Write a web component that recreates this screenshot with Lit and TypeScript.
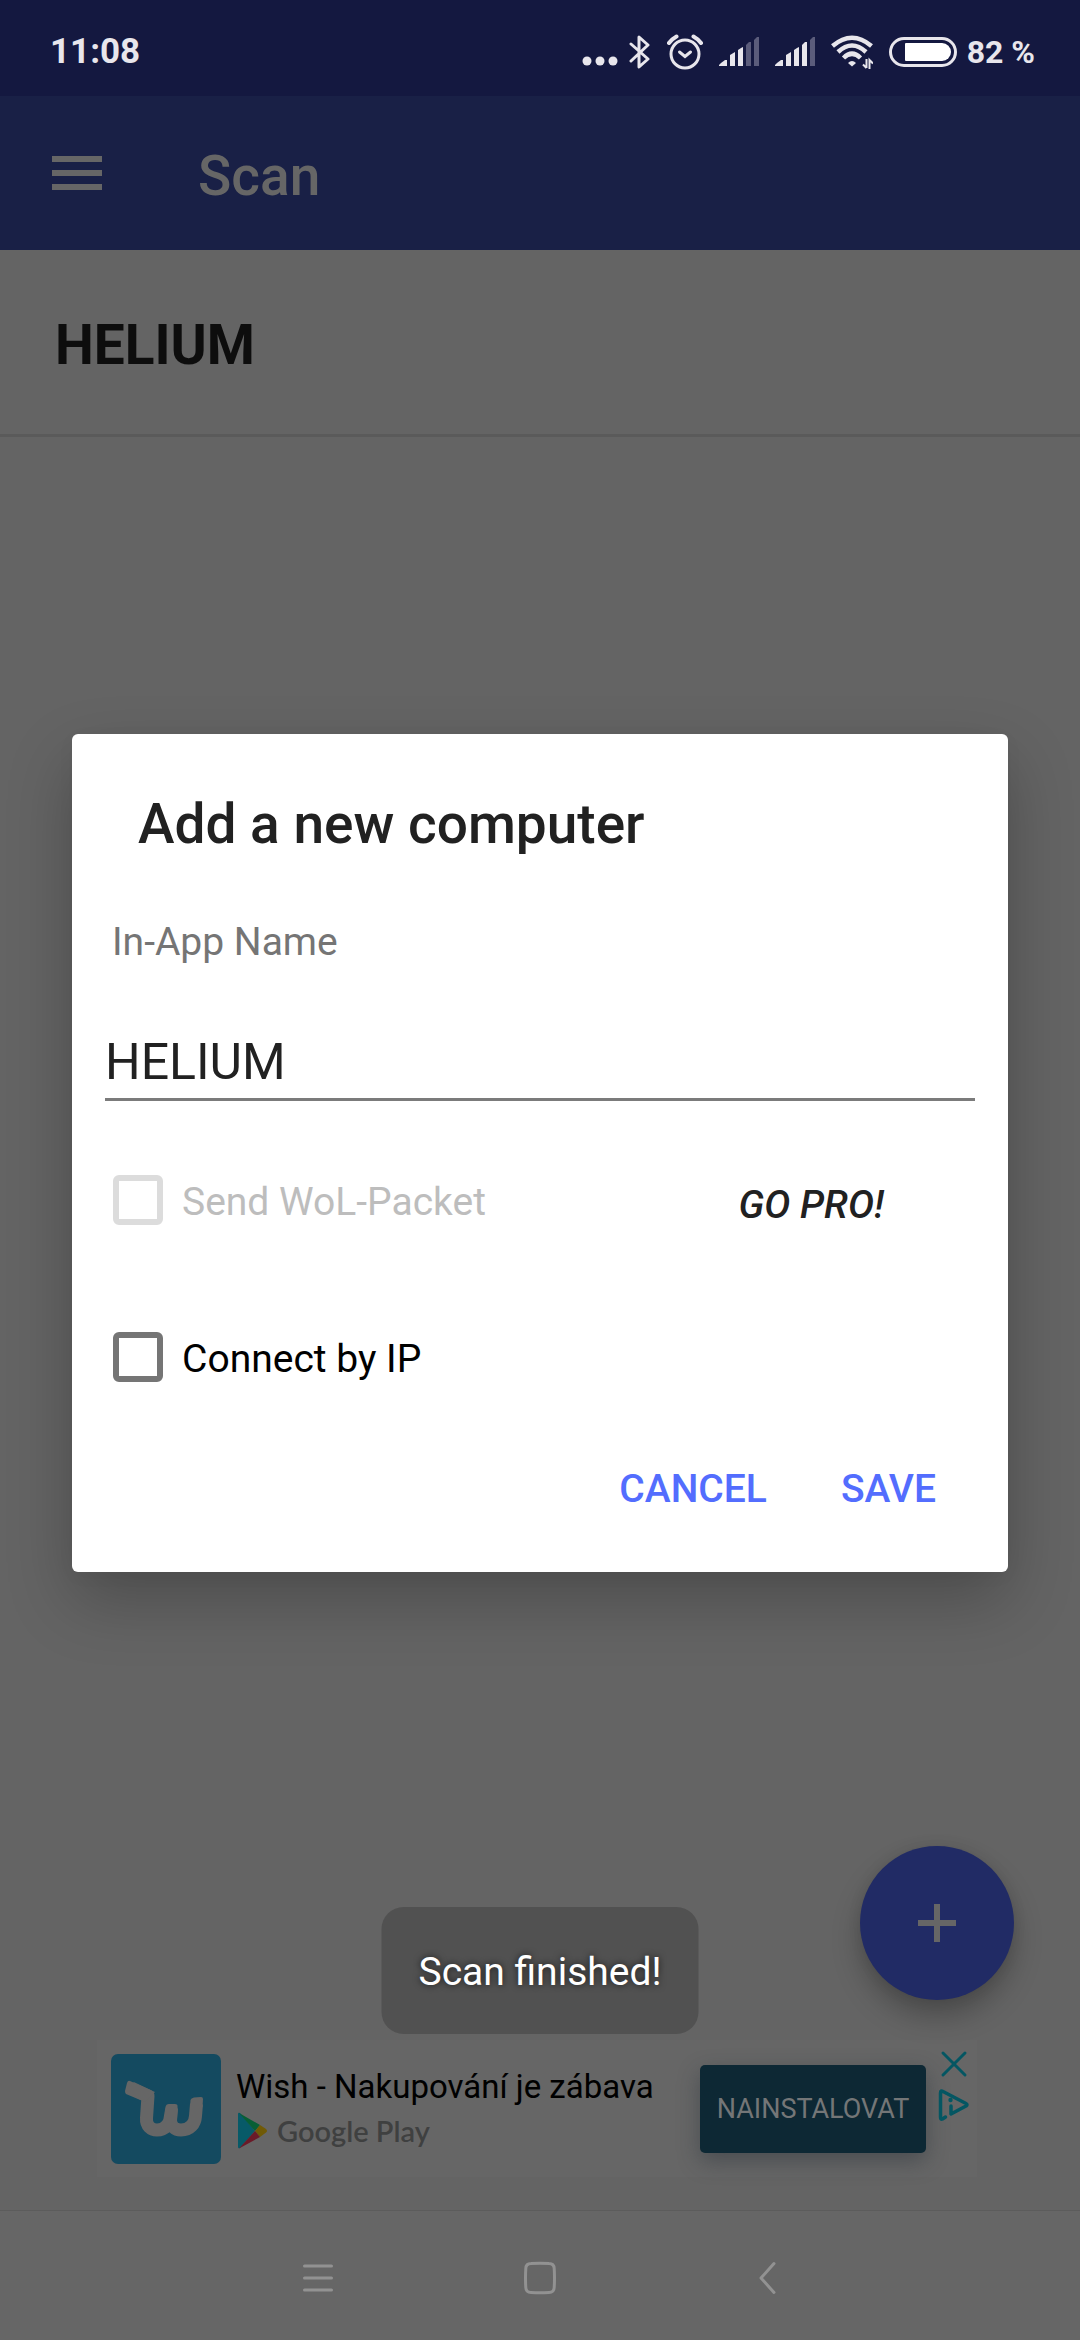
import { LitElement, html, css, svg } from "lit";
import { customElement, property, state } from "lit/decorators.js";

/** Cellular strength: five slanted bars, the first `level` of them lit. */
@customElement("signal-bars")
class SignalBars extends LitElement {
  @property({ type: Number }) level = 5;

  static styles = css`
    :host { display: block; }
    .bars { display: block; width: 40px; height: 30px; fill: #e8e6ec; }
    .off { fill: #5b5c7b; }
  `;

  render() {
    const shapes = [
      "0,29 0,28 2,26 6,23 8,23 8,29",
      "11,29 11,18 16,15 16,29",
      "19,29 19,13 22,11 24,10 24,29",
      "27,29 27,8 30,5 32,5 32,29",
      "35,29 35,3 38,0 40,0 40,29",
    ];
    return html`<svg class="bars" viewBox="0 0 40 30" aria-hidden="true">
      ${shapes.map((p, i) => svg`<polygon class=${i < this.level ? "on" : "off"} points=${p} />`)}
    </svg>`;
  }
}

@customElement("status-bar")
class StatusBar extends LitElement {
  static styles = css`
    :host { display: block; background: #141840; }
    .bar {
      display: flex; align-items: center; height: 96px; box-sizing: border-box;
      padding: 8px 45px 0 50px; color: #e8e6ec;
      font: 700 35px/40px Roboto, sans-serif;
    }
    .icons { display: flex; align-items: center; margin-left: auto; gap: 16px; }
    .icons svg { display: block; fill: none; stroke: #e8e6ec; stroke-width: 3; }
    .pair { display: flex; align-items: center; gap: 11px; }
    .battery { display: flex; align-items: center; gap: 10px; font-size: 32px; }
  `;

  render() {
    return html`<div class="bar">
      <span>11:08</span>
      <div class="icons">
        <div class="pair">
          <svg width="36" height="36" viewBox="0 0 36 36" aria-hidden="true">
            <g fill="#e8e6ec" stroke="none">
              <circle cx="5" cy="27" r="4.5" /><circle cx="18" cy="27" r="4.5" /><circle cx="31" cy="27" r="4.5" />
            </g>
          </svg>
          <svg width="22" height="36" viewBox="0 0 22 36" aria-hidden="true">
            <path d="M2 10 L19 25 L10 33 V3 L19 11 L2 27" stroke-linecap="round" stroke-linejoin="round" />
          </svg>
        </div>
        <svg width="36" height="36" viewBox="0 0 36 36" aria-hidden="true">
          <circle cx="18" cy="20" r="14" />
          <path d="M12.5 18 L18 22.5 L23.500 18" stroke-linecap="round" stroke-width="3" />
          <path d="M2 9 Q5 5 9.500 2.500 M34 9 Q31 5 26.500 2.500" stroke-linecap="round" stroke-width="4" />
        </svg>
        <signal-bars level="3"></signal-bars>
        <signal-bars level="4"></signal-bars>
        <svg width="42" height="36" viewBox="0 0 42 36" aria-hidden="true">
          <path d="M1.500 12 Q21 -4.500 40.500 12" stroke-width="4.500" />
          <path d="M7 18 Q21 5 35 18" stroke-width="4.500" />
          <path d="M12.500 24 Q21 15.500 29.500 24" stroke-width="4.500" />
          <path d="M17 29 Q21 25 25 29 L21 32.500 Z" fill="#e8e6ec" stroke="none" />
          <path d="M35.500 25 V34 M35.500 34 L32 30.500 M38.500 35 V26 L42 29.500" stroke-width="2" />
        </svg>
        <div class="battery">
          <svg width="68" height="30" viewBox="0 0 68 30" aria-hidden="true">
            <rect x="1.500" y="1.500" width="65" height="27" rx="13.500" />
            <path d="M17 6 H53 A9 9 0 0 1 53 24 H17 Q16 24 16 23 V7 Q16 6 17 6 Z" fill="#fff" stroke="none" />
          </svg>
          <span>82 %</span>
        </div>
      </div>
    </div>`;
  }
}

@customElement("ad-banner")
class AdBanner extends LitElement {
  static styles = css`
    :host { display: block; width: 880px; max-width: 100%; }
    .ad {
      display: flex; align-items: flex-start; box-sizing: border-box; height: 137px;
      padding: 0 7px 0 14px; background: #666; font-family: Roboto, sans-serif;
    }
    .logo { display: block; flex: none; margin-top: 14px; }
    .info { display: flex; flex-direction: column; flex: 1; padding: 27px 0 0 15px; gap: 5px; }
    .name { font-size: 33px; line-height: 40px; color: #000; white-space: nowrap; }
    .store { display: flex; align-items: center; gap: 9px; padding-left: 2px; font: 600 29px/38px "Lato", sans-serif; color: #3f4040; white-space: nowrap; }
    .store svg { display: block; }
    .install {
      border: 0; border-radius: 5px; margin: 25px 12px 0 0; padding: 0; width: 226px; height: 88px;
      background: #0d2834; color: #747677; font: 400 27px/34px Roboto, sans-serif;
      box-shadow: 0 8px 22px rgba(30, 40, 50, 0.4);
    }
    .side { display: flex; flex-direction: column; align-items: center; gap: 10px; padding-top: 10px; width: 32px; }
    .side button { border: 0; padding: 0; background: none; }
    .side svg { display: block; fill: none; stroke: #045662; stroke-linecap: round; stroke-linejoin: round; }
  `;

  render() {
    return html`<div class="ad">
      <svg class="logo" width="110" height="110" viewBox="0 0 110 110" role="img" aria-label="Wish">
        <rect width="110" height="110" rx="7" fill="#144a60" />
        <g fill="none" stroke="#666" stroke-width="13" stroke-linejoin="round">
          <path d="M20 34 L37 42 L35.500 64 C35 72 40 76 46 76 C54 76 59 70 59.500 62 L60.500 56.500 L59.500 66 C59.500 72 64 76 70 76 C79 76 84 70 84.500 62 L85.500 50" stroke-linecap="butt" />
          <path d="M20 34 L37 42" stroke-width="9" />
        </g>
        <path d="M19 27 L44 38 L34 48 L15 40 Q14 39 14 37 L16 29 Q17 26 19 27 Z" fill="#666" />
        <path d="M54 58 L54.500 53 Q55 50 58 50 H64 Q67 50 66.500 53 L66 58 Z" fill="#666" />
        <path d="M79 53 L79.500 46 Q80 44 83 43.500 L90 43 Q92 43 92 45 L91.500 53 Z" fill="#666" />
      </svg>
      <div class="info">
        <span class="name">Wish - Nakupování je zábava</span>
        <span class="store">
          <svg width="30" height="38" viewBox="0 0 30 38" aria-hidden="true">
            <path d="M0 2 Q0 0 2 1 L17 19 L2 36 Q0 37 0 35 Z" fill="#075a68" />
            <path d="M1 1 L22 13 L17 19 Z" fill="#075f35" />
            <path d="M22 13 L28 17 Q30 19 28 20.500 L22 25 L17 19 Z" fill="#705a06" />
            <path d="M1 36.500 L22 25 L17 19 Z" fill="#6b1a28" />
          </svg>
          Google Play
        </span>
      </div>
      <button class="install">NAINSTALOVAT</button>
      <div class="side">
        <button aria-label="Close ad">
          <svg width="28" height="28" viewBox="0 0 28 28" stroke-width="3"><path d="M3 3 L25 25 M25 3 L3 25" /></svg>
        </button>
        <button aria-label="Ad choices">
          <svg width="32" height="34" viewBox="0 0 32 34" stroke-width="3.500">
            <path d="M7.500 29 L4.500 31 Q2.500 32 2.500 29 V5 Q2.500 2 5 3.500 L28 15.500 Q30 16.500 28 18 L13 26 V18" />
            <circle cx="12.500" cy="12" r="2.200" fill="#045662" stroke="none" />
          </svg>
        </button>
      </div>
    </div>`;
  }
}

@customElement("computer-dialog")
class ComputerDialog extends LitElement {
  @property() name = "";
  @state() private byIp = false;

  static styles = css`
    :host { display: block; }
    .dialog {
      display: flex; flex-direction: column; box-sizing: border-box; padding: 58px 33px 34px;
      border-radius: 6px; background: #fff; color: #212121; font-family: Roboto, sans-serif;
      box-shadow: 0 28px 66px rgba(0, 0, 0, 0.24), 0 4px 20px rgba(0, 0, 0, 0.03);
    }
    h2 { margin: 0 33px; font-size: 55px; line-height: 64px; font-weight: 500; }
    .caption { margin: 63px 7px 0; font-size: 39px; line-height: 46px; color: #757575; }
    .field {
      margin: 68px 0 0; padding: 0 0 7px; border: 0; border-bottom: 3px solid #7b7b7b; border-radius: 0;
      outline: 0; background: none; color: #212121; font: 400 50px/58px Roboto, sans-serif; height: 68px;
      box-sizing: border-box; width: 100%;
    }
    .row { display: flex; align-items: flex-start; justify-content: space-between; margin: 74px 8px 0; }
    .row + .row { margin-top: 97px; }
    .option { display: flex; align-items: flex-start; gap: 19px; font-size: 39px; line-height: 54px; color: #000; }
    .option.disabled { color: #bdbdbd; }
    .box {
      appearance: none; box-sizing: border-box; flex: none; margin: 0; width: 50px; height: 50px;
      border: 6px solid #757575; border-radius: 6px; background: #fff;
    }
    .box:checked { background: #536dfe; }
    .box:disabled { border-color: #dcdcdc; }
    button { border: 0; background: none; padding: 0; }
    .pro { margin-right: 83px; color: #212121; font: italic 500 39px/60px Roboto, sans-serif; }
    .actions { display: flex; justify-content: flex-end; gap: 30px; margin: 53px 17px 0 0; }
    .actions button { height: 99px; padding: 0 22px; color: #536dfe; font: 500 39px/46px Roboto, sans-serif; }
  `;

  render() {
    return html`<form class="dialog" role="dialog" aria-labelledby="title" @submit=${(e: Event) => e.preventDefault()}>
      <h2 id="title">Add a new computer</h2>
      <label class="caption" for="name">In-App Name</label>
      <input class="field" id="name" type="text" .value=${this.name} />
      <div class="row">
        <label class="option disabled"><input class="box" type="checkbox" disabled />Send WoL-Packet</label>
        <button class="pro" type="button">GO PRO!</button>
      </div>
      <div class="row">
        <label class="option">
          <input class="box" type="checkbox" .checked=${this.byIp} @change=${() => (this.byIp = !this.byIp)} />Connect by IP
        </label>
      </div>
      <div class="actions">
        <button type="button">CANCEL</button>
        <button type="submit">SAVE</button>
      </div>
    </form>`;
  }
}

@customElement("app-root")
class AppRoot extends LitElement {
  static styles = css`
    :host { display: block; font-family: Roboto, sans-serif; }
    .screen { display: flex; flex-direction: column; min-height: 100vh; background: #646464; }
    .window { position: relative; display: flex; flex-direction: column; flex: 1; }
    .appbar { display: flex; align-items: center; height: 154px; padding: 0 44px; gap: 88px; background: #192046; }
    .appbar button, .nav button { border: 0; padding: 0; background: none; }
    .appbar svg, .nav svg { display: block; }
    h1 { margin: 0; padding-top: 6px; font-size: 55px; line-height: 64px; font-weight: 500; color: #666; }
    .content { position: relative; flex: 1; }
    .list { list-style: none; margin: 0; padding: 0; }
    .list li {
      padding: 63px 55px 57px; border-bottom: 3px solid #5a5a5a;
      font-size: 55px; line-height: 64px; font-weight: 700; color: #0d0d0d;
    }
    .fab {
      position: absolute; right: 66px; bottom: 40px; display: grid; place-items: center;
      width: 154px; height: 154px; padding: 0; border: 0; border-radius: 50%; background: #212b65;
      box-shadow: 0 16px 28px rgba(0, 0, 0, 0.25), 0 0 14px rgba(0, 0, 0, 0.08);
    }
    .banner { display: flex; justify-content: center; padding: 0 6px 33px 0; }
    .overlay { position: absolute; inset: 0; display: flex; flex-direction: column; justify-content: center; padding: 0 72px; }
    .toast {
      position: absolute; left: 50%; bottom: 176px; transform: translateX(-50%);
      padding: 42px 37px 39px; border-radius: 22px; background: #515151; color: #fff;
      font-size: 39px; line-height: 46px; white-space: nowrap; text-shadow: 0 0 7px rgba(0, 0, 0, 0.7);
    }
    .nav {
      display: flex; align-items: center; justify-content: center; gap: 182px; height: 129px;
      border-top: 1px solid #5c5c5c; background: #666;
    }
    .nav svg { fill: none; stroke: #929292; stroke-width: 3; stroke-linecap: round; stroke-linejoin: round; }
  `;

  render() {
    return html`<div class="screen">
      <status-bar></status-bar>
      <div class="window">
        <header class="appbar">
          <button aria-label="Menu">
            <svg width="66" height="66" viewBox="0 0 66 66" fill="#666">
              <path d="M8 16 h50 v6 h-50 Z M8 30 h50 v6 h-50 Z M8 44 h50 v6 h-50 Z" />
            </svg>
          </button>
          <h1>Scan</h1>
        </header>
        <main class="content">
          <ul class="list"><li>HELIUM</li></ul>
          <button class="fab" aria-label="Add computer">
            <svg width="38" height="38" viewBox="0 0 38 38" fill="#666"><path d="M16 0 h6 v16 h16 v6 h-16 v16 h-6 v-16 h-16 v-6 h16 Z" /></svg>
          </button>
        </main>
        <div class="banner"><ad-banner></ad-banner></div>
        <div class="overlay"><computer-dialog name="HELIUM"></computer-dialog></div>
        <div class="toast" role="status">Scan finished!</div>
      </div>
      <nav class="nav">
        <button aria-label="Recent apps">
          <svg width="40" height="40" viewBox="0 0 40 40"><path d="M6.500 10 H33.500 M6.500 22 H33.500 M6.500 34 H33.500" /></svg>
        </button>
        <button aria-label="Home">
          <svg width="40" height="40" viewBox="0 -2 40 40"><path d="M11 5.500 Q20 5 29 5.500 Q34 5.500 34.200 10.500 Q34.800 20 34.200 29.500 Q34 34.500 29 34.500 Q20 35 11 34.500 Q6 34.500 5.800 29.500 Q5.200 20 5.800 10.500 Q6 5.500 11 5.500 Z" /></svg>
        </button>
        <button aria-label="Back">
          <svg width="40" height="40" viewBox="0 -2 40 40"><path d="M32 5.500 L19 20 L32 34.500" /></svg>
        </button>
      </nav>
    </div>`;
  }
}
